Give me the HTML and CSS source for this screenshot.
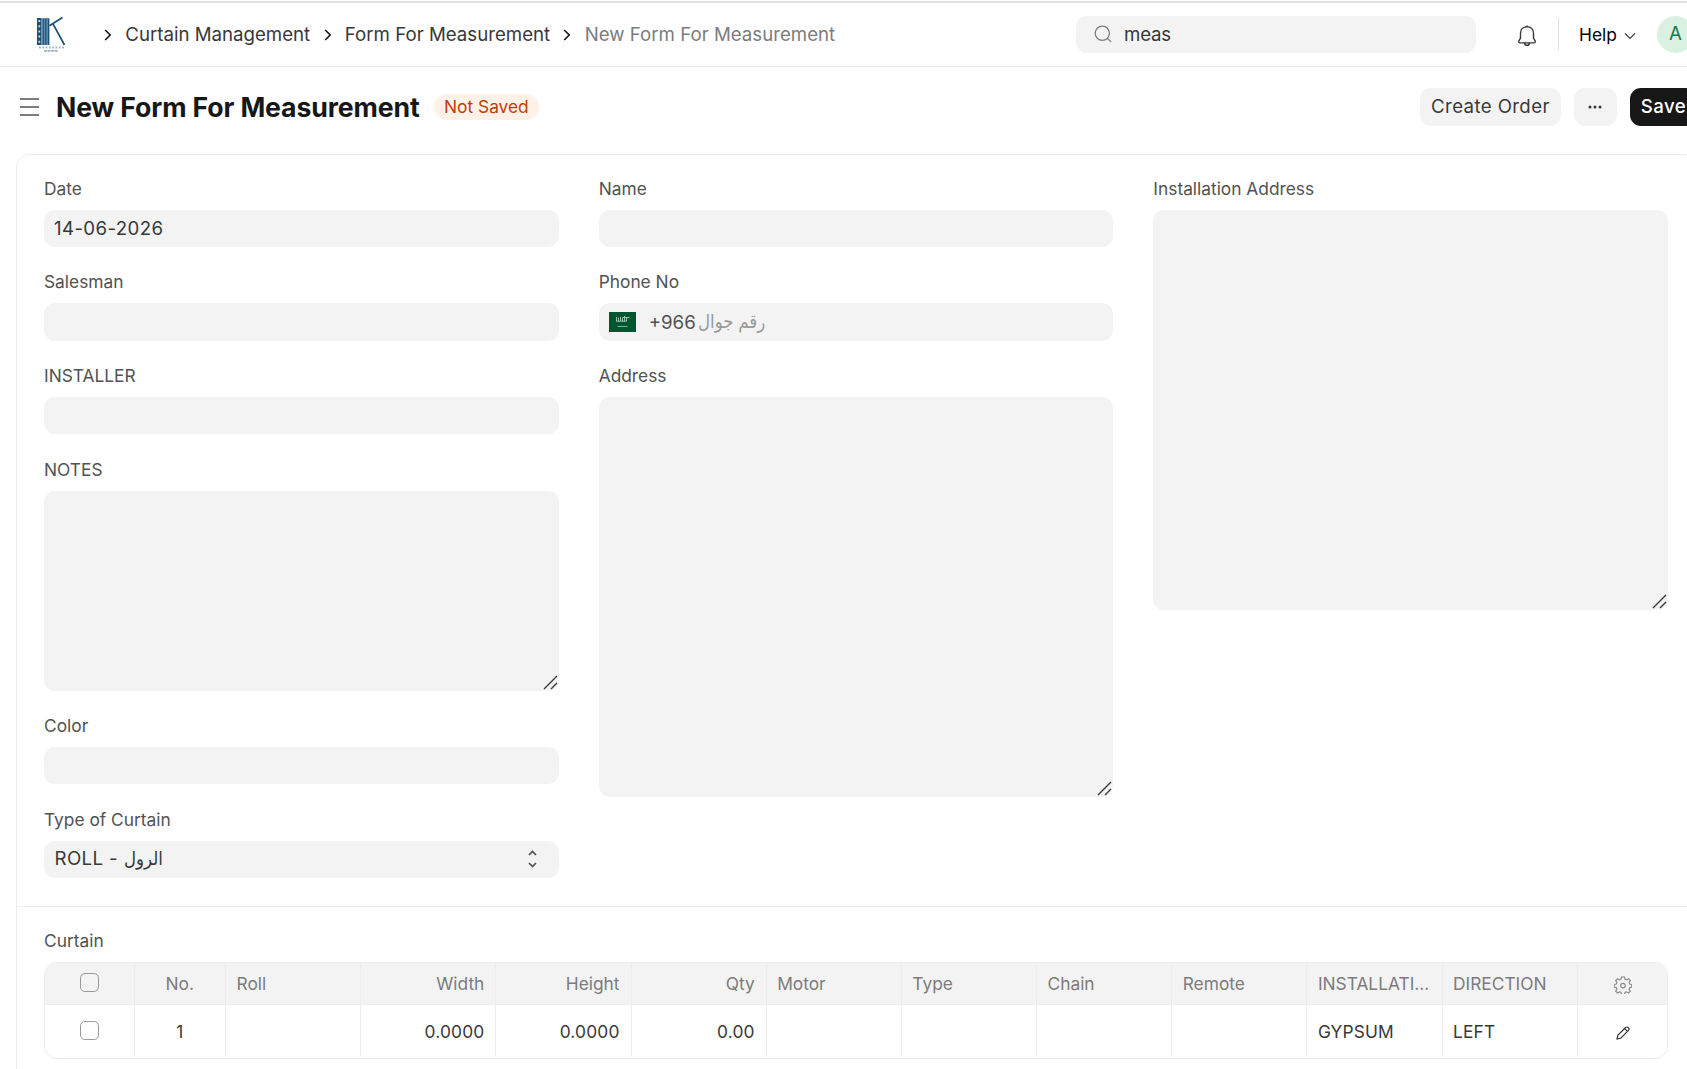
FILE: index.html
```html
<!DOCTYPE html>
<html lang="en">
<head>
  <meta charset="UTF-8">
  <meta name="viewport" content="width=device-width, initial-scale=1.0">
  <title>New Form For Measurement</title>
  <link rel="stylesheet" href="styles.css">
</head>
<body>
  <header class="navbar">
    <a class="logo" href="#" aria-label="Home">
      <svg width="30" height="38" viewBox="0 0 30 38">
        <rect x="1" y="2" width="4.600" height="27" fill="#1b4f76"/>
        <path d="M3.300 4v24" stroke="#c8d8e3" stroke-width="1.800" stroke-dasharray="2 3.200"/>
        <rect x="6.200" y="2" width="7.200" height="27" fill="#5d89a8"/>
        <path d="M7.200 3v26M9.800 3v26M12.600 3v26" stroke="#1b4f76" stroke-width="1.100"/>
        <path d="M13.400 9.700L26.500 1.500M17 7.900L28.500 29" fill="none" stroke="#1b4f76" stroke-width="1.700"/>
        <path d="M3 31.500h25" stroke="#9db3c4" stroke-width="2" stroke-dasharray="1.800 1.500"/>
        <path d="M8 34.800h14" stroke="#9db3c4" stroke-width="1.800" stroke-dasharray="3 .6"/>
      </svg>
    </a>
    <nav class="breadcrumb">
      <svg class="crumb-arrow" width="8" height="12" viewBox="0 0 8 12"><path d="M1.200 1l5 5-5 5"/></svg>
      <a href="#">Curtain Management</a>
      <svg class="crumb-arrow" width="8" height="12" viewBox="0 0 8 12"><path d="M1.200 1l5 5-5 5"/></svg>
      <a href="#">Form For Measurement</a>
      <svg class="crumb-arrow" width="8" height="12" viewBox="0 0 8 12"><path d="M1.200 1l5 5-5 5"/></svg>
      <span class="current">New Form For Measurement</span>
    </nav>
    <div class="search">
      <svg width="18" height="18" viewBox="0 0 18 18"><circle cx="8.300" cy="8.200" r="7.100"/><path d="M13.300 13.300l3.800 3.600"/></svg>
      <input type="text" value="meas" aria-label="Search">
    </div>
    <svg class="bell" width="20" height="22" viewBox="0 0 20 22"><path d="M10 1.800c-3.900 0-6.500 2.700-6.500 6.400v4.600c0 1.400-1.800 2.400-1.800 3.800 0 .8.500 1.300 1.300 1.300h14c.8 0 1.300-.5 1.300-1.300 0-1.400-1.800-2.400-1.800-3.800V8.200c0-3.700-2.600-6.400-6.500-6.400zM7.400 18c.3 1.600 1.200 2.400 2.600 2.400s2.300-.8 2.600-2.400M10 1.800V.6"/></svg>
    <div class="divider"></div>
    <a class="help" href="#">Help
      <svg width="12" height="8" viewBox="0 0 12 8"><path d="M1 1.300l5 5 5-5"/></svg>
    </a>
    <div class="avatar">A</div>
  </header>

  <div class="page-head">
    <svg class="menu-icon" width="19" height="18" viewBox="0 0 19 18"><path d="M0 1h19M0 9h19M0 17h19"/></svg>
    <h1>New Form For Measurement</h1>
    <span class="indicator">Not Saved</span>
    <div class="actions">
      <button class="btn">Create Order</button>
      <button class="btn btn-more" aria-label="Menu">
        <svg width="14" height="4" viewBox="0 0 14 4"><circle cx="2" cy="2" r="1.500"/><circle cx="7" cy="2" r="1.500"/><circle cx="12" cy="2" r="1.500"/></svg>
      </button>
      <button class="btn btn-primary">Save</button>
    </div>
  </div>

  <main class="form-card">
    <section class="form-columns">
      <div class="column">
        <div class="field">
          <label for="date">Date</label>
          <input type="text" id="date" value="14-06-2026">
        </div>
        <div class="field">
          <label for="salesman">Salesman</label>
          <input type="text" id="salesman">
        </div>
        <div class="field">
          <label for="installer">INSTALLER</label>
          <input type="text" id="installer">
        </div>
        <div class="field">
          <label for="notes">NOTES</label>
          <div class="textarea-wrap">
            <textarea id="notes" class="short"></textarea>
            <svg class="grip" width="15" height="15" viewBox="0 0 15 15"><path d="M1 14L14 1M8 14l6-6"/></svg>
          </div>
        </div>
        <div class="field">
          <label for="color">Color</label>
          <input type="text" id="color">
        </div>
        <div class="field">
          <label>Type of Curtain</label>
          <div class="control select">
            <span>ROLL - <span class="arabic">الرول</span></span>
            <svg width="9" height="18" viewBox="0 0 9 18"><path d="M1 5l3.500-3.500L8 5M1 13l3.500 3.500L8 13"/></svg>
          </div>
        </div>
      </div>

      <div class="column">
        <div class="field">
          <label for="name">Name</label>
          <input type="text" id="name">
        </div>
        <div class="field">
          <label>Phone No</label>
          <div class="control phone">
            <svg width="27" height="20" viewBox="0 0 27 20">
              <rect width="27" height="20" fill="#00562f"/>
              <path d="M7.500 5v4M9.500 5.500v4M11.500 5v4M13.500 5.500v4M15.500 4v5.500M17.500 5v4M7 9.200h11M14 5.500h6.500" stroke="#a9c9b9" stroke-width=".9"/>
              <path d="M8.500 14.500h10" stroke="#7fae96" stroke-width="1"/>
            </svg>
            <span class="code">+966</span>
            <span class="arabic placeholder">رقم جوال</span>
          </div>
        </div>
        <div class="field">
          <label for="address">Address</label>
          <div class="textarea-wrap">
            <textarea id="address"></textarea>
            <svg class="grip" width="15" height="15" viewBox="0 0 15 15"><path d="M1 14L14 1M8 14l6-6"/></svg>
          </div>
        </div>
      </div>

      <div class="column">
        <div class="field">
          <label for="install-address">Installation Address</label>
          <div class="textarea-wrap">
            <textarea id="install-address"></textarea>
            <svg class="grip" width="15" height="15" viewBox="0 0 15 15"><path d="M1 14L14 1M8 14l6-6"/></svg>
          </div>
        </div>
      </div>
    </section>

    <section class="grid-section">
      <label>Curtain</label>
      <div class="grid">
        <div class="grid-row grid-head">
          <div class="center"><input type="checkbox" aria-label="Select all"></div>
          <div class="center">No.</div>
          <div>Roll</div>
          <div class="right">Width</div>
          <div class="right">Height</div>
          <div class="right">Qty</div>
          <div>Motor</div>
          <div>Type</div>
          <div>Chain</div>
          <div>Remote</div>
          <div>INSTALLATI...</div>
          <div>DIRECTION</div>
          <div class="center">
            <svg class="gear" width="18" height="18" viewBox="0 0 18 18"><path d="M7.500 1h3l.5 2.200 1.500.7 2-1.200 1.800 1.900-1.200 2 .6 1.400 2.100.5v2.600l-2.100.6-.6 1.400 1.200 2-1.900 1.900-2-1.200-1.400.6-.5 2.100h-3l-.5-2.100-1.400-.6-2 1.200-1.900-1.900 1.200-2-.6-1.400L.2 11.100V8.500L2.300 8l.6-1.400-1.200-2 1.900-1.900 2 1.200L7 3.200z"/><circle cx="9" cy="9.600" r="2.300"/></svg>
          </div>
        </div>
        <div class="grid-row grid-body">
          <div class="center"><input type="checkbox" aria-label="Select row 1"></div>
          <div class="center">1</div>
          <div></div>
          <div class="right">0.0000</div>
          <div class="right">0.0000</div>
          <div class="right">0.00</div>
          <div></div>
          <div></div>
          <div></div>
          <div></div>
          <div>GYPSUM</div>
          <div>LEFT</div>
          <div class="center">
            <svg class="pencil" width="14" height="14" viewBox="0 0 14 14"><path d="M1 13l.8-3.700 7.800-7.800c.7-.7 1.800-.7 2.500 0l.4.4c.7.700.7 1.800 0 2.500l-7.800 7.800zM8.600 2.600l2.800 2.800"/></svg>
          </div>
        </div>
      </div>
    </section>
  </main>
</body>
</html>
```

FILE: styles.css
```css
* {
  box-sizing: border-box;
}
html {
  overflow: hidden;
}
body {
  margin: 0;
  width: 1712px;
  height: 1069px;
  overflow: hidden;
  background: #fff;
  border-top: 1px solid #fff;
  font-family: Inter, "DejaVu Sans", sans-serif;
  font-size: 18.67px;
  color: #383838;
}
a {
  color: inherit;
  text-decoration: none;
}
svg {
  display: block;
  flex: none;
  fill: none;
}
input, textarea, button {
  font: inherit;
  letter-spacing: inherit;
  color: inherit;
}

/* navbar */
.navbar {
  display: flex;
  align-items: center;
  height: 66px;
  padding: 0 0 1px 36px;
  border-top: 2px solid #e0e2e1;
  border-bottom: 1px solid #ededed;
}
.logo {
  width: 68px;
  padding-top: 1px;
}
.breadcrumb {
  display: flex;
  align-items: center;
  gap: 13.3px;
  width: 972px;
  white-space: nowrap;
}
.breadcrumb .current {
  color: #7c7c7c;
}
.crumb-arrow {
  margin-top: 2px;
  stroke: #171717;
  stroke-width: 1.6;
}
.search {
  display: flex;
  align-items: center;
  gap: 12px;
  width: 400px;
  height: 37px;
  padding-left: 18px;
  background: #f3f3f3;
  border-radius: 11px;
}
.search svg {
  stroke: #7c7c7c;
  stroke-width: 1.3;
}
.search input {
  width: 300px;
  padding: 0;
  border: none;
  outline: none;
  background: none;
  letter-spacing: -0.01em;
}
.bell {
  margin: 3px 21px 0 41px;
  stroke: #383838;
  stroke-width: 1.4;
}
.divider {
  width: 1px;
  height: 32px;
  background: #dedede;
}
.help {
  display: flex;
  align-items: center;
  gap: 7px;
  width: 78px;
  margin-left: 20px;
  font-size: 17.33px;
  color: #000;
}
.help svg {
  stroke: #383838;
  stroke-width: 1.2;
  margin-top: 4px;
}
.avatar {
  width: 37px;
  height: 37px;
  line-height: 35px;
  border-radius: 50%;
  background: #daf0e1;
  color: #16794c;
  text-align: center;
}

/* page title */
.page-head {
  display: flex;
  align-items: center;
  height: 87px;
  padding: 0 15px 7px 20px;
}
.menu-icon {
  stroke: #525252;
  stroke-width: 1.5;
}
.page-head h1 {
  margin: 0 14px 0 17px;
  font-size: 26.67px;
  font-weight: 700;
  letter-spacing: -0.005em;
  color: #171717;
}
.indicator {
  height: 26px;
  padding: 0 10.5px;
  line-height: 26px;
  border-radius: 13px;
  background: #fff1e7;
  color: #bd3e0c;
  font-size: 17.33px;
}
.actions {
  display: flex;
  gap: 13px;
  margin-left: auto;
}
.btn {
  height: 38px;
  padding: 0 11px 1px;
  border: none;
  border-radius: 11px;
  background: #f3f3f3;
  letter-spacing: 0.02em;
}
.btn-more {
  width: 43px;
  padding: 0 14px;
}
.btn-more svg {
  fill: #383838;
}
.btn-primary {
  background: #171717;
  color: #fff;
  font-weight: 500;
}

/* form */
.form-card {
  width: 1680px;
  height: 940px;
  margin-left: 16px;
  border: 1px solid #ededed;
  border-radius: 13px;
}
.form-columns {
  display: flex;
  gap: 40px;
  height: 751px;
  padding: 22.67px 27px 0;
}
.column {
  flex: 1;
}
.field {
  margin-bottom: 24px;
}
label {
  display: block;
  height: 32.16px;
  line-height: 22px;
  font-size: 17.33px;
  color: #525252;
}
.field input, .control {
  display: flex;
  align-items: center;
  width: 100%;
  height: 37.33px;
  padding: 0 10px;
  border: none;
  border-radius: 11px;
  background: #f3f3f3;
  letter-spacing: 0.02em;
}
.field + .field {
  margin-top: 24.17px;
}
.textarea-wrap {
  position: relative;
}
textarea {
  display: block;
  width: 100%;
  height: 400px;
  border: none;
  border-radius: 11px;
  background: #f3f3f3;
  resize: none;
}
textarea.short {
  height: 200px;
}
.grip {
  position: absolute;
  right: 1px;
  bottom: 1px;
  stroke: #383838;
  stroke-width: 1.4;
}
.select {
  justify-content: space-between;
}
.field .select {
  padding: 0 10px 1px 10.5px;
}
.select svg {
  margin-right: 12px;
  stroke: #525252;
  stroke-width: 1.7;
}
.code {
  margin: 0 2px 0 13px;
  color: #525252;
  letter-spacing: 0;
}
.arabic {
  display: inline-block;
  line-height: 1;
  letter-spacing: 0;
  transform: scaleX(0.89);
  transform-origin: left;
}
.placeholder {
  color: #999;
}

/* child table */
.grid-section {
  padding: 23px 27px 0;
  border-top: 1px solid #ededed;
}
.grid-section > label {
  height: 32px;
}
.grid {
  height: 97px;
  border: 1px solid #ededed;
  border-radius: 13px;
  overflow: hidden;
  font-size: 17.33px;
  color: #383838;
}
.grid-row {
  display: grid;
  grid-template-columns: 90px 91px repeat(10, 135.18px) 1fr;
}
.grid-row > div {
  display: flex;
  align-items: center;
  min-width: 0;
  padding: 0 11px 0 10.5px;
  border-right: 1px solid #ededed;
  white-space: nowrap;
}
.grid-row > div:last-child {
  border-right: none;
}
.grid-row > .center {
  justify-content: center;
}
.grid-row > .right {
  justify-content: flex-end;
}
.grid-head {
  height: 42px;
  background: #f3f3f3;
  border-bottom: 1px solid #ededed;
  color: #7c7c7c;
}
.grid-body {
  height: 51px;
  letter-spacing: 0.01em;
}
.grid-body > div {
  padding-top: 2px;
}
.grid input {
  appearance: none;
  width: 19px;
  height: 19px;
  margin: 0 0 2px;
  border: 1px solid #999;
  border-radius: 5px;
  background: #fff;
}
.grid-head input {
  background: none;
}
.gear {
  margin: 2px 0 0 1px;
  stroke: #8a8a8a;
  stroke-width: 1.2;
}
.pencil {
  margin: 2px 0 0 1px;
  stroke: #383838;
  stroke-width: 1.2;
}
```
